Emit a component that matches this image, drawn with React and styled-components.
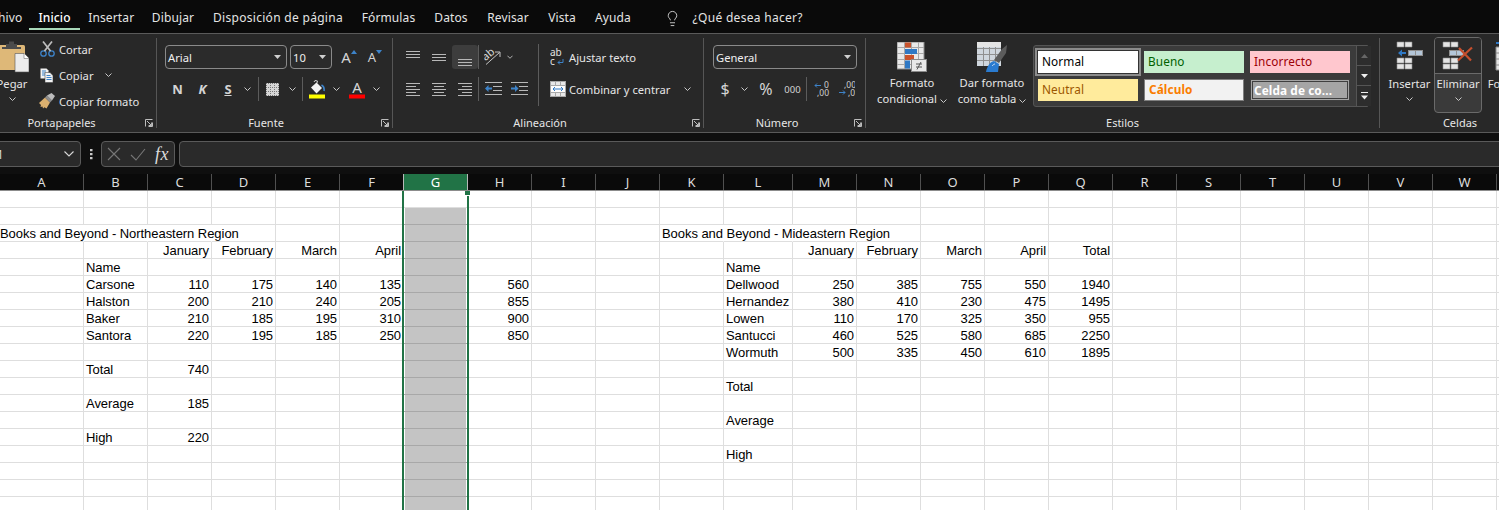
import React from "react";
import styled, { createGlobalStyle } from "styled-components";
import { Lightbulb } from "lucide-react";

const UI = `"Noto Sans", "Open Sans", sans-serif`;
const Global = createGlobalStyle`
  html, body { margin: 0; padding: 0; background: #fff; }
  #root { width: 1499px; height: 510px; overflow: hidden; }
`;
const Page = styled.div`
  width: 1499px; height: 510px; overflow: hidden; display: flex; flex-direction: column;
  font-family: ${UI}; font-size: 11.2px; color: #e6e6e6; background: #fff;
`;

/* ---------- tabs ---------- */
const TabBar = styled.div`
  height: 33px; background: #0a0a0a; display: flex; align-items: flex-start; margin-left: -27px; flex: none;
`;
const Tab = styled.div`
  width: ${p => p.$w}px; flex: none; text-align: center; padding-top: 8px; height: 20px; line-height: 20px; white-space: nowrap; font-size: 12px;
  letter-spacing: ${p => p.$ls ?? 0.12}px; color: ${p => (p.$active ? "#fff" : "#e4e4e4")};
  font-weight: ${p => (p.$active ? 500 : 400)};
  border-bottom: 2px solid ${p => (p.$active ? "#a8d8b9" : "transparent")};
`;
const TellMe = styled.div`
  display: flex; align-items: center; gap: 12px; margin-left: 23px; height: 20px; padding-top: 8px; font-size: 12px;
  line-height: 20px; letter-spacing: 0.3px; color: #e4e4e4; white-space: nowrap;
`;

/* ---------- ribbon ---------- */
const Ribbon = styled.div`
  height: 98px; flex: none; display: flex; background: #282828;
  border-top: 1px solid #5a5a5a; border-bottom: 1px solid #5a5a5a;
`;
const RibbonSep = styled.div`width: 1px; margin: 4px 0 4px; background: #565656; flex: none;`;
const Group = styled.div`
  width: ${p => p.$w}px; flex: none; display: flex; flex-direction: column; height: 98px;
`;
const GroupBody = styled.div`height: 82px; display: flex; flex: none; padding-left: ${p => p.$pl || 0}px;`;
const GroupFoot = styled.div`
  position: relative; height: 14px; line-height: 14px; text-align: center; font-size: 11px; box-sizing: border-box;
  padding-right: ${p => p.$pr || 0}px; color: #e6e6e6; white-space: nowrap;
`;
const Launcher = styled.svg`position: absolute; right: 3px; top: 3px;`;

const PasteCol = styled.div`
  width: 36px; margin-left: -6px; margin-right: 9px; display: flex; flex-direction: column; align-items: center; padding-top: 7px; flex: none;
`;
const PasteLabel = styled.div`line-height: 16px; margin-top: 3px;`;
const ChevRow = styled.div`height: 14px; display: flex; align-items: center; justify-content: center;`;
const SmallList = styled.div`display: flex; flex-direction: column; margin-top: 2px;`;
const SmallBtn = styled.div`
  height: 26px; display: flex; align-items: center; white-space: nowrap; gap: ${p => p.$gap ?? 4}px;
  margin-left: ${p => p.$ml || 0}px; width: ${p => (p.$w ? `${p.$w}px` : "auto")}; justify-content: ${p => (p.$w ? "space-between" : "flex-start")};
`;
const IconBox = styled.span`width: ${p => p.$w}px; display: inline-flex; justify-content: center; align-items: center; flex: none;`;

const Stack = styled.div`
  display: flex; flex-direction: column; padding-top: 11px; padding-left: ${p => p.$pl || 0}px; flex: none;
  width: ${p => (p.$w ? `${p.$w}px` : "auto")}; box-sizing: border-box;
`;
const Row = styled.div`display: flex; align-items: center; height: ${p => p.$h || 24}px; margin-top: ${p => p.$mt || 0}px;`;
const Select = styled.div`
  width: ${p => p.$w}px; height: 24px; box-sizing: border-box; border: 1px solid #8a8a8a; border-radius: 4px; background: #2b2b2b;
  margin-right: ${p => p.$mr || 0}px; padding: 0 5px 0 2px; display: flex; align-items: center; justify-content: space-between; color: #f0f0f0; flex: none;
`;
const Slot = styled.div`
  width: ${p => p.$w}px; height: 24px; display: flex; align-items: center; justify-content: center; flex: none; box-sizing: border-box;
  border-radius: 3px; background: ${p => (p.$active ? "#3d3d3d" : "transparent")}; padding-top: ${p => (p.$active ? 5 : 0)}px;
  font-weight: ${p => (p.$bold ? 700 : 400)}; font-style: ${p => (p.$italic ? "italic" : "normal")};
  text-decoration: ${p => (p.$under ? "underline" : "none")};
  font-size: ${p => p.$fs || 12}px; color: #d4d4d4;
`;
const UpTri = styled.svg`align-self: flex-start; margin-top: 5px; flex: none;`;
const VSep = styled.div`width: 1px; height: 24px; background: #5c5c5c; flex: none;`;
const TallSep = styled.div`width: 1px; height: 62px; margin-top: 10px; background: #5c5c5c; flex: none;`;

const BigCol = styled.div`
  width: 78px; margin-right: 2px; flex: none; display: flex; flex-direction: column; align-items: center; padding-top: 8px; line-height: 16px; white-space: nowrap;
`;
const BigText = styled.div`margin-top: 3px; text-align: center;`;
const Gallery = styled.div`
  width: 335px; height: 62px; margin-top: 11px; box-sizing: border-box; flex: none; border: 1px solid #555; border-radius: 3px 0 0 3px;
  background: #3b3b3b; display: flex;
`;
const StyleGrid = styled.div`
  display: grid; grid-template-columns: repeat(3, 100px); grid-template-rows: 22px 22px; gap: 6px; padding: 5px 4px; flex: none;
`;
const StyleCell = styled.div`
  box-sizing: border-box; padding-left: ${p => p.$pl ?? 4}px; line-height: ${p => p.$lh || 21}px; white-space: nowrap; overflow: hidden; font-size: 11.8px; letter-spacing: 0.1px;
  background: ${p => p.$bg}; color: ${p => p.$fg}; font-weight: ${p => (p.$bold ? 700 : 400)};
  border: ${p => p.$border || "none"};
  box-shadow: ${p => p.$shadow || "none"};
`;
const GalleryScroll = styled.div`
  margin-left: 2px; width: 14px; flex: none; display: grid; grid-template-rows: 20px 20px 1fr; border-left: 1px solid #555;
`;
const ScrollBtn = styled.div`
  display: flex; align-items: center; justify-content: center; border-bottom: ${p => (p.$last ? "none" : "1px solid #555")}; background: #2d2d2d;
`;
const CellCol = styled.div`
  width: ${p => p.$w}px; margin-left: ${p => p.$ml || 0}px; flex: none; display: flex; flex-direction: column; align-items: center; white-space: nowrap;
  padding-top: 7px; line-height: 16px;
`;
const CellText = styled.div`margin-top: 5px; height: 16px;`;
const DeleteBtn = styled.div`
  width: 48px; height: 76px; margin-top: 3px; box-sizing: border-box; flex: none; border: 1px solid #6a6a6a; border-radius: 4px; overflow: hidden;
  display: flex; flex-direction: column; align-items: center; white-space: nowrap; line-height: 16px; background: #3a3a3a;
`;
const DeleteTop = styled.div`
  width: 100%; height: 36px; background: #2b2b2b; border-bottom: 1px solid #6a6a6a; display: flex; justify-content: center; padding-top: 3px; box-sizing: border-box; flex: none;
`;
const DeleteLabel = styled.div`margin-top: 2px;`;

/* ---------- formula bar ---------- */
const FormulaBar = styled.div`
  height: 41px; flex: none; background: #0f0f0f; display: flex; align-items: flex-start; padding-top: 8px; box-sizing: border-box;
`;
const NameBox = styled.div`
  width: 142px; margin-left: -61px; height: 26px; box-sizing: border-box; border: 1px solid #5a5a5a; border-radius: 4px; background: #2a2a2a;
  display: flex; align-items: center; justify-content: space-between; padding: 0 6px 0 48px; color: #ddd; flex: none; font-size: 12px;
`;
const Dots = styled.svg`margin: 7px 8px 0 9px; flex: none;`;
const FxBox = styled.div`
  width: 74px; height: 26px; box-sizing: border-box; border: 1px solid #5a5a5a; border-radius: 4px; background: #2a2a2a; display: flex; align-items: center;
  padding-left: 4px; gap: 8px; flex: none;
`;
const FxText = styled.span`font-family: "Liberation Serif", serif; font-style: italic; font-size: 18px; color: #dcdcdc; margin-left: 1px; letter-spacing: 0.5px;`;
const FormulaInput = styled.div`
  flex: 1; margin: 0 -4px 0 4px; height: 26px; box-sizing: border-box; border: 1px solid #5a5a5a; border-radius: 4px; background: #2a2a2a;
`;

/* ---------- sheet ---------- */
const COLS = ["A","B","C","D","E","F","G","H","I","J","K","L","M","N","O","P","Q","R","S","T","U","V","W","X"];
const widthOf = c => (c === "A" ? 84 : c === "L" ? 69 : 64);
const template = COLS.map(widthOf).map(w => `${w}px`).join(" ");

const HeaderRow = styled.div`
  display: grid; grid-template-columns: ${template}; height: 17px; flex: none; box-sizing: border-box; background: #0a0a0a; border-bottom: 1px solid #8c8c8c;
`;
const HeadCell = styled.div`
  box-sizing: border-box; border-right: 1px solid ${p => (p.$sel || p.$beforeSel ? "#b8b8b8" : "#505050")};
  background: ${p => (p.$sel ? "#217346" : "transparent")}; color: ${p => (p.$sel ? "#fff" : "#dcdcdc")};
  text-align: center; line-height: 16px; font-size: 13px; font-family: "Noto Sans", sans-serif; font-weight: 400;
`;
const Sheet = styled.div`position: relative; flex: 1; overflow: hidden; background: #fff;`;
const Grid = styled.div`
  display: grid; grid-template-columns: ${template}; grid-auto-rows: 17px; font-family: "Liberation Sans", Arial, sans-serif; font-size: 13px; letter-spacing: -0.05px; color: #000;
`;
const Cell = styled.div`
  box-sizing: border-box; white-space: nowrap; line-height: 17px;
  border-bottom: 1px solid ${p => (p.$gray ? "#a8a8a8" : "#dedede")};
  border-right: 1px solid ${p => (p.$open ? "transparent" : "#dedede")};
  background: ${p => (p.$gray ? "#c4c4c4" : "transparent")};
  box-shadow: ${p => (p.$sel ? "inset 1px 0 #fff, inset -1px 0 #fff" : "none")};
  text-align: ${p => (p.$right ? "right" : "left")};
  padding: 0 ${p => (p.$right ? 2 : 0)}px 0 ${p => (p.$flush ? 0 : 2)}px;
`;
const Selection = styled.div`
  position: absolute; left: 402px; top: -1px; bottom: 0; width: 67px; box-sizing: border-box;
  border-left: 2px solid #217346; border-right: 2px solid #217346; border-top: 1px solid #217346; pointer-events: none;
`;
const Handle = styled.div`
  position: absolute; right: -3px; top: -1px; width: 5px; height: 5px; background: #217346; border-bottom: 1px solid #fff;
`;

/* ---------- icons ---------- */
const Chev = ({ c = "#c8c8c8" }) => (
  <svg width="7" height="4" viewBox="0 0 7 4"><path d="M.5.5l3 3 3-3" fill="none" stroke={c} strokeWidth="1" /></svg>
);
const BigChev = () => (
  <svg width="10" height="6" viewBox="0 0 10 6"><path d="M.5.5L5 5 9.500.5" fill="none" stroke="#d8d8d8" strokeWidth="1.100" /></svg>
);
const Tri = ({ c = "#d0d0d0" }) => (
  <svg width="7" height="4" viewBox="0 0 7 4"><path d="M0 0h7L3.5 4z" fill={c} /></svg>
);
const Abs = ({ x, y, w, h, children }) => (
  <svg width={w} height={h} viewBox={`${x} ${y} ${w} ${h}`} style={{ display: "block", flex: "none" }}>{children}</svg>
);
const LauncherIcon = () => (
  <Launcher width="8" height="8" viewBox="0 0 8 8">
    <path d="M.5 7.5V.5h7M7.5 3.500v4h-4M2 2l4.500 4.500M3.600 6.500h3v-3" fill="none" stroke="#bdbdbd" strokeWidth="1" />
  </Launcher>
);
const PasteIcon = () => (
  <Abs x={-6} y={41} w={34} h={32}>
    <rect x="-6" y="45" width="30" height="25" rx="1.5" fill="#deb878" />
    <path d="M5 47v-3h3v-2.500h5V44h3v3h4v2H1v-2z" fill="#4b4b4b" />
    <path d="M14 53.500h9l5 5v13.500H14z" fill="#ececec" stroke="#555" strokeWidth=".6" />
    <path d="M23 53.500v5h5" fill="#fff" stroke="#777" strokeWidth=".6" />
  </Abs>
);
const ScissorsIcon = () => (
  <Abs x={39} y={41} w={17} h={17}>
    <circle cx="43.500" cy="53.500" r="2.700" fill="none" stroke="#3d83c9" strokeWidth="1.300" />
    <circle cx="51.500" cy="53.500" r="2.700" fill="none" stroke="#3d83c9" strokeWidth="1.300" />
    <path d="M44.500 51L52 41.500M50.500 51L43 41.500" stroke="#bdbdbd" strokeWidth="1.700" />
  </Abs>
);
const CopyIcon = () => (
  <Abs x={39} y={68} w={15} h={15}>
    <path d="M39.500 68.500h6l2 2v8h-8z" fill="#f2f2f2" />
    <path d="M41 71h4M41 73h3M41 75h3" stroke="#3d83c9" />
    <path d="M44 72.500h5l3 3v7h-8z" fill="#f2f2f2" stroke="#333" strokeWidth=".5" />
    <path d="M45.500 75.500h4M45.500 77.500h5M45.500 79.500h5" stroke="#3d83c9" />
  </Abs>
);
const BrushIcon = () => (
  <Abs x={38} y={93} w={18} h={17}>
    <path d="M39 103l6-5.500 5 5-3.500 6-2-1.200-1.500 1.200-.5-2-2 .5.500-2z" fill="#dbb06f" />
    <path d="M45 97.500l2-2 5 5-2 2z" fill="#8d8d8d" />
    <path d="M47 95.500l4.500-2.500 3.500 3-3 4.500z" fill="#bcbcbc" />
  </Abs>
);
const BorderIcon = () => (
  <svg width="13" height="13" viewBox="0 0 13 13">
    <rect width="13" height="13" fill="#d6d6d6" />
    <path d="M0 4.500h13M0 8.500h13M4.500 0v13M8.500 0v13M.5 0v13M12.500 0v13M0 .5h13M0 12.500h13" stroke="#777" strokeDasharray="1 1" />
  </svg>
);
const FillIcon = () => (
  <svg width="16" height="19" viewBox="0 0 16 19">
    <path d="M2 7.500L7.500 2.500l5.500 5.500-5.500 5.500z" fill="#f2f2f2" />
    <path d="M5 2l1-1.500 2.500.5-.5 2" fill="none" stroke="#d0d0d0" />
    <path d="M12.500 5c2 1 3 3 2.500 6" fill="none" stroke="#3d83c9" strokeWidth="1.600" />
    <rect y="14.500" width="16" height="4" fill="#ffff00" />
  </svg>
);
const ColorA = () => (
  <svg width="16" height="19" viewBox="0 0 16 19">
    <text x="8" y="13" textAnchor="middle" fontSize="15" fill="#d4d4d4" fontFamily="Noto Sans">A</text>
    <rect y="14.500" width="16" height="4" fill="#ff0000" />
  </svg>
);
const LinesIcon = ({ rows, w = 14, h = 15, c = "#b8b8b8" }) => (
  <svg width={w} height={h} viewBox={`0 0 ${w} ${h}`}>
    {rows.map(([a, b, y], i) => <path key={i} d={`M${a} ${y + 0.5}H${b}`} stroke={c} />)}
  </svg>
);
const OrientIcon = () => (
  <svg width="18" height="18" viewBox="0 0 18 18">
    <text x="0" y="11" fontSize="11" fill="#d8d8d8" fontFamily="Noto Sans" transform="rotate(-40 4 10)">ab</text>
    <path d="M2 16.500L15.500 4.500M11 4h5v5" fill="none" stroke="#c4c4c4" />
  </svg>
);
const WrapIcon = () => (
  <svg width="16" height="19" viewBox="0 0 16 19">
    <text x="0" y="8" fontSize="10" fill="#e4e4e4" fontFamily="Noto Sans">ab</text>
    <text x="0" y="17" fontSize="10" fill="#e4e4e4" fontFamily="Noto Sans">c</text>
    <path d="M13 11v3.500H8M10 12.500l-2 2 2 2" fill="none" stroke="#3d83c9" />
  </svg>
);
const MergeIcon = () => (
  <svg width="16" height="16" viewBox="0 0 16 16">
    <rect width="16" height="16" fill="#a8a8a8" />
    <path d="M1 1h4v3H1zM6 1h4v3H6zM11 1h4v3h-4zM1 12h4v3H1zM6 12h4v3H6zM11 12h4v3h-4z" fill="#e8e8e8" />
    <rect x="1" y="5" width="14" height="6" fill="#fdfdfd" />
    <path d="M3 8h10M5 6L3 8l2 2M11 6l2 2-2 2" fill="none" stroke="#2f79c5" />
  </svg>
);
const IndentIcon = ({ flip }) => (
  <svg width="17" height="14" viewBox="0 0 17 14">
    <path d="M0 .5h17M8 4.500h9M8 8.500h9M0 12.500h17" stroke="#b8b8b8" />
    {flip
      ? <path d="M0 5.500h4V3l3.500 3.500L4 10V7.500H0z" fill="#3d83c9" />
      : <path d="M7 5.500H3.500V3L0 6.500 3.500 10V7.500H7z" fill="#3d83c9" />}
  </svg>
);
const DecIcon = ({ more }) => (
  <svg width="16" height="16" viewBox="0 0 16 16" fontFamily="Noto Sans" fontSize="8.500" fill="#d0d0d0">
    {more ? <>
      <text x="5" y="7">,00</text><text x="9" y="15">,0</text>
      <path d="M0 11.500h6M4 9.500l2 2-2 2" fill="none" stroke="#3d83c9" />
    </> : <>
      <text x="10" y="7">0</text><text x="3" y="15">,00</text>
      <path d="M1 4.500h6M3 2.500l-2 2 2 2" fill="none" stroke="#3d83c9" />
    </>}
  </svg>
);
const CondIcon = () => (
  <Abs x={899} y={42} w={30} h={30}>
    <rect x="899" y="42" width="27" height="27" fill="#e9e9e9" stroke="#8a8a8a" />
    <path d="M899 47.500h27M899 53.500h27M899 59.500h27M899 64.500h27M906.500 42v27M913.500 42v27M920.500 42v27" stroke="#a8a8a8" />
    <rect x="907" y="42.500" width="6" height="5" fill="#c9532c" />
    <rect x="907" y="49" width="12" height="5" fill="#2f79c5" />
    <rect x="907" y="55" width="9" height="5" fill="#c9532c" />
    <rect x="907" y="60.500" width="5" height="8" fill="#2f79c5" />
    <rect x="913.500" y="59.500" width="15" height="12" fill="#e8e8e8" stroke="#8a8a8a" />
    <path d="M918 64h6M918 67h6M923 62l-4 7.500" stroke="#555" fill="none" />
  </Abs>
);
const TableFmtIcon = () => (
  <Abs x={979} y={42} w={30} h={30}>
    <rect x="979" y="42" width="24" height="24" fill="#cfd6dd" />
    <path d="M979 48.500h24M979 54.500h24M979 60.500h24M985.500 42v24M991.500 42v24M997.500 42v24" stroke="#8f8f8f" />
    <rect x="979" y="42" width="24" height="5" fill="#e4e4e4" />
    <path d="M996 60l8-11 5-4-1 8-7 10z" fill="#5c5c5c" />
    <path d="M988 72c1-6 4-10 8-11l5 3-1 8z" fill="#2a7bd0" />
    <path d="M994 66c1-1 2-2 3-2" stroke="#cfe2f5" fill="none" />
  </Abs>
);
const InsertIcon = () => (
  <Abs x={1396} y={41} w={28} h={30}>
    <path d="M1397 42h7v5h-7zM1405 42h7v5h-7zM1397 58h7v5h-7zM1405 58h7v5h-7zM1397 64h7v5h-7zM1405 64h7v5h-7z" fill="#e4e4e4" stroke="#8a8a8a" strokeWidth=".6" />
    <path d="M1408 50h15v6h-15z" fill="#8f8f8f" />
    <path d="M1409 51h6v4h-6zM1416 51h6v4h-6z" fill="#b4c6d8" />
    <path d="M1406 52h-4v-2.500l-4 3.500 4 3.500V54h4z" fill="#2f79c5" />
  </Abs>
);
const DeleteIcon = () => (
  <Abs x={1443} y={41} w={32} h={30}>
    <path d="M1444 42h7v5h-7zM1452 42h7v5h-7zM1444 58h7v5h-7zM1452 58h7v5h-7zM1444 64h7v5h-7zM1452 64h7v5h-7z" fill="#e4e4e4" stroke="#8a8a8a" strokeWidth=".6" />
    <path d="M1450 50h15v6h-15z" fill="#8f8f8f" />
    <path d="M1451 51h6v4h-6zM1458 51h6v4h-6z" fill="#b4c6d8" />
    <path d="M1460 48l12 12.500M1473 47.500L1459 60.500" stroke="#c64f2d" strokeWidth="2.200" />
  </Abs>
);
const FormatIcon = () => (
  <Abs x={1495} y={41} w={30} h={30}>
    <path d="M1496 43h28" stroke="#2f79c5" strokeWidth="2" />
    <path d="M1496 47h24v23h-24z" fill="#e4e4e4" stroke="#8a8a8a" />
    <path d="M1496 53h24M1496 59h24M1496 65h24M1504 47v23M1512 47v23" stroke="#8a8a8a" />
  </Abs>
);

/* ---------- data ---------- */
const CONTENT = {
  3: { A: "Books and Beyond - Northeastern Region", K: "Books and Beyond - Mideastern Region" },
  4: { C: "January", D: "February", E: "March", F: "April", M: "January", N: "February", O: "March", P: "April", Q: "Total" },
  5: { B: "Name", L: "Name" },
  6: { B: "Carsone", C: 110, D: 175, E: 140, F: 135, H: 560, L: "Dellwood", M: 250, N: 385, O: 755, P: 550, Q: 1940 },
  7: { B: "Halston", C: 200, D: 210, E: 240, F: 205, H: 855, L: "Hernandez", M: 380, N: 410, O: 230, P: 475, Q: 1495 },
  8: { B: "Baker", C: 210, D: 185, E: 195, F: 310, H: 900, L: "Lowen", M: 110, N: 170, O: 325, P: 350, Q: 955 },
  9: { B: "Santora", C: 220, D: 195, E: 185, F: 250, H: 850, L: "Santucci", M: 460, N: 525, O: 580, P: 685, Q: 2250 },
  10: { L: "Wormuth", M: 500, N: 335, O: 450, P: 610, Q: 1895 },
  11: { B: "Total", C: 740 },
  12: { L: "Total" },
  13: { B: "Average", C: 185 },
  14: { L: "Average" },
  15: { B: "High", C: 220 },
  16: { L: "High" },
};
const ROWS = Array.from({ length: 19 }, (_, i) => i + 1);
const isOpen = (r, c) => r === 3 && ["A", "B", "C", "K", "L", "M"].includes(c);

const align = {
  top: [[0, 14, 1], [0, 14, 4], [0, 14, 7]],
  mid: [[0, 14, 4], [0, 14, 7], [0, 14, 10]],
  bot: [[0, 14, 7], [0, 14, 10], [0, 14, 13]],
  left: [[0, 14, 1], [0, 10, 4], [0, 14, 7], [0, 10, 10], [0, 14, 13]],
  center: [[0, 14, 1], [2, 12, 4], [0, 14, 7], [2, 12, 10], [0, 14, 13]],
  right: [[0, 14, 1], [4, 14, 4], [0, 14, 7], [4, 14, 10], [0, 14, 13]],
};
const TABS = [["Archivo", 56], ["Inicio", 51], ["Insertar", 62.5], ["Dibujar", 61], ["Disposición de página", 149, 0.3], ["Fórmulas", 72], ["Datos", 53], ["Revisar", 61], ["Vista", 47], ["Ayuda", 55]];

export default function App() {
  return (
    <Page>
      <Global />
      <TabBar>
        {TABS.map(([t, w, ls]) => <Tab key={t} $w={w} $ls={ls} $active={t === "Inicio"}>{t}</Tab>)}
        <TellMe>
          <Lightbulb size={17} strokeWidth={1.2} color="#e4e4e4" />
          ¿Qué desea hacer?
        </TellMe>
      </TabBar>

      <Ribbon>
        <Group $w={156}>
          <GroupBody>
            <PasteCol>
              <PasteIcon />
              <PasteLabel>Pegar</PasteLabel>
              <ChevRow><Chev /></ChevRow>
            </PasteCol>
            <SmallList>
              <SmallBtn><IconBox $w={16}><ScissorsIcon /></IconBox>Cortar</SmallBtn>
              <SmallBtn><IconBox $w={16}><CopyIcon /></IconBox>Copiar<IconBox $w={22}><Chev /></IconBox></SmallBtn>
              <SmallBtn><IconBox $w={16}><BrushIcon /></IconBox>Copiar formato</SmallBtn>
            </SmallList>
          </GroupBody>
          <GroupFoot $pr={33}>Portapapeles<LauncherIcon /></GroupFoot>
        </Group>
        <RibbonSep />

        <Group $w={235}>
          <GroupBody $pl={8}>
            <Stack>
              <Row>
                <Select $w={122} $mr={3}>Arial<Tri /></Select>
                <Select $w={42}>10<Tri /></Select>
                <Slot $w={34} $fs={15}>A<UpTri width="6" height="4" viewBox="0 0 6 4"><path d="M0 4l3-4 3 4z" fill="#3d83c9" /></UpTri></Slot>
                <Slot $w={18} $fs={13}>A<UpTri width="6" height="4" viewBox="0 0 6 4"><path d="M0 0l3 4 3-4z" fill="#3d83c9" /></UpTri></Slot>
              </Row>
              <Row $mt={8}>
                <Slot $w={25} $bold $fs={13}>N</Slot>
                <Slot $w={25} $bold $italic $fs={13}>K</Slot>
                <Slot $w={26} $bold $under $fs={13}>S</Slot>
                <Slot $w={12}><Chev /></Slot>
                <Slot $w={5} />
                <VSep />
                <Slot $w={27}><BorderIcon /></Slot>
                <Slot $w={12}><Chev /></Slot>
                <Slot $w={4} />
                <VSep />
                <Slot $w={28}><FillIcon /></Slot>
                <Slot $w={10}><Chev /></Slot>
                <Slot $w={31}><ColorA /></Slot>
                <Slot $w={8}><Chev /></Slot>
              </Row>
            </Stack>
          </GroupBody>
          <GroupFoot $pr={17}>Fuente<LauncherIcon /></GroupFoot>
        </Group>
        <RibbonSep />

        <Group $w={310}>
          <GroupBody $pl={7}>
            <Stack $w={138}>
              <Row>
                <Slot $w={26}><LinesIcon rows={align.top} /></Slot>
                <Slot $w={26}><LinesIcon rows={align.mid} /></Slot>
                <Slot $w={26} $active><LinesIcon rows={align.bot} /></Slot>
                <VSep />
                <Slot $w={28}><OrientIcon /></Slot>
                <Slot $w={6}><Chev /></Slot>
              </Row>
              <Row $mt={8}>
                <Slot $w={26}><LinesIcon rows={align.left} /></Slot>
                <Slot $w={26}><LinesIcon rows={align.center} /></Slot>
                <Slot $w={26}><LinesIcon rows={align.right} /></Slot>
                <VSep />
                <Slot $w={28}><IndentIcon /></Slot>
                <Slot $w={24}><IndentIcon flip /></Slot>
              </Row>
            </Stack>
            <TallSep />
            <Stack $pl={11}>
              <Row>
                <IconBox $w={16}><WrapIcon /></IconBox>
                <SmallBtn $gap={0} $ml={3}>Ajustar texto</SmallBtn>
              </Row>
              <Row $mt={8}>
                <IconBox $w={16}><MergeIcon /></IconBox>
                <SmallBtn $gap={0} $ml={3} $w={122}>Combinar y centrar<Chev /></SmallBtn>
              </Row>
            </Stack>
          </GroupBody>
          <GroupFoot $pr={16}>Alineación<LauncherIcon /></GroupFoot>
        </Group>
        <RibbonSep />

        <Group $w={161}>
          <GroupBody $pl={9}>
            <Stack>
              <Row>
                <Select $w={144}>General<Tri /></Select>
              </Row>
              <Row $mt={8}>
                <Slot $w={24} $fs={16}>$</Slot>
                <Slot $w={14}><Chev /></Slot>
                <Slot $w={30} $fs={16}>%</Slot>
                <Slot $w={23} $fs={9.5}>000</Slot>
                <Slot $w={2} />
                <VSep />
                <Slot $w={29}><DecIcon /></Slot>
                <Slot $w={22}><DecIcon more /></Slot>
              </Row>
            </Stack>
          </GroupBody>
          <GroupFoot $pr={15}>Número<LauncherIcon /></GroupFoot>
        </Group>
        <RibbonSep />

        <Group $w={513}>
          <GroupBody $pl={7}>
            <BigCol>
              <CondIcon />
              <BigText>Formato<br />condicional <Chev /></BigText>
            </BigCol>
            <BigCol>
              <TableFmtIcon />
              <BigText>Dar formato<br />como tabla <Chev /></BigText>
            </BigCol>
            <Gallery>
              <StyleGrid>
                <StyleCell $bg="#fff" $fg="#000" $shadow="0 0 0 1px #333, 0 0 0 3px #8c8c8c">Normal</StyleCell>
                <StyleCell $bg="#c6efce" $fg="#006100">Bueno</StyleCell>
                <StyleCell $bg="#ffc7ce" $fg="#9c0006">Incorrecto</StyleCell>
                <StyleCell $bg="#ffeb9c" $fg="#9c5700">Neutral</StyleCell>
                <StyleCell $bg="#f2f2f2" $fg="#fa7d00" $bold $lh={19} $border="1px solid #7f7f7f">Cálculo</StyleCell>
                <StyleCell $bg="#a5a5a5" $fg="#fff" $bold $lh={16} $pl={1} $border="3px double #3f3f3f">Celda de co...</StyleCell>
              </StyleGrid>
              <GalleryScroll>
                <ScrollBtn>
                  <svg width="7" height="4" viewBox="0 0 7 4"><path d="M0 4h7L3.500 0z" fill="#666" /></svg>
                </ScrollBtn>
                <ScrollBtn><Tri c="#eee" /></ScrollBtn>
                <ScrollBtn $last>
                  <svg width="7" height="8" viewBox="0 0 7 8"><path d="M0 .5h7" stroke="#eee" /><path d="M0 3.500h7L3.500 7.500z" fill="#eee" /></svg>
                </ScrollBtn>
              </GalleryScroll>
            </Gallery>
          </GroupBody>
          <GroupFoot>Estilos</GroupFoot>
        </Group>
        <RibbonSep />

        <Group $w={160}>
          <GroupBody $pl={5}>
            <CellCol $w={49}>
              <InsertIcon />
              <CellText>Insertar</CellText>
              <ChevRow><Chev /></ChevRow>
            </CellCol>
            <DeleteBtn>
              <DeleteTop><DeleteIcon /></DeleteTop>
              <DeleteLabel>Eliminar</DeleteLabel>
              <ChevRow><Chev /></ChevRow>
            </DeleteBtn>
            <CellCol $w={52} $ml={2}>
              <FormatIcon />
              <CellText>Formato</CellText>
            </CellCol>
          </GroupBody>
          <GroupFoot>Celdas</GroupFoot>
        </Group>
      </Ribbon>

      <FormulaBar>
        <NameBox>G1<BigChev /></NameBox>
        <Dots width="3" height="12" viewBox="0 0 3 12"><path d="M0 1h2.500v2.200H0zM0 5h2.500v2.200H0zM0 9h2.500v2.200H0z" fill="#c8c8c8" /></Dots>
        <FxBox>
          <svg width="16" height="16" viewBox="0 0 16 16"><path d="M2 2l12 12M14 2L2 14" stroke="#777" strokeWidth="1.100" /></svg>
          <svg width="16" height="16" viewBox="0 0 16 16"><path d="M1 9l5 5L15 3" fill="none" stroke="#777" strokeWidth="1.100" /></svg>
          <FxText>fx</FxText>
        </FxBox>
        <FormulaInput />
      </FormulaBar>

      <HeaderRow>
        {COLS.map(c => <HeadCell key={c} $sel={c === "G"} $beforeSel={c === "F"}>{c}</HeadCell>)}
      </HeaderRow>

      <Sheet>
        <Grid>
          {ROWS.flatMap(r => COLS.map(c => {
            const v = CONTENT[r]?.[c];
            const isRight = typeof v === "number" || r === 4;
            const sel = c === "G";
            return (
              <Cell key={`${c}${r}`} $right={v !== undefined && isRight} $open={isOpen(r, c)}
                $flush={r === 3 && c === "A"} $gray={sel && r > 1} $sel={sel && r > 1}>
                {v}
              </Cell>
            );
          }))}
        </Grid>
        <Selection><Handle /></Selection>
      </Sheet>
    </Page>
  );
}
